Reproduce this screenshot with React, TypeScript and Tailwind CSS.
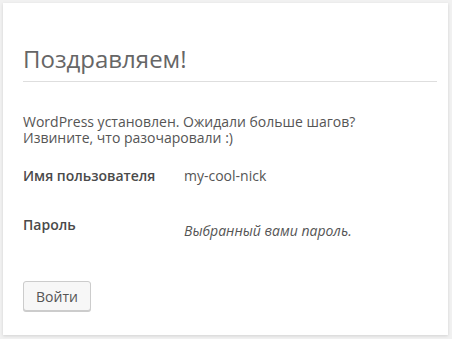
export default function App() {
  return (
    <div className="w-[452px] h-[339px] bg-[#f1f1f1] pt-[3px] pl-[3px] overflow-hidden" style={{ fontFamily: '"Open Sans", "Noto Sans", sans-serif' }}>
      <div className="w-[445px] h-[332px] bg-white shadow-[0_1px_3px_rgba(0,0,0,0.13)] pl-[20px] pr-[11px] pt-[43px]">
        <h1 className="text-[24px] leading-[26px] font-normal text-[#666] pb-[9px] border-b border-[#dedede]">Поздравляем!</h1>
        <p className="mt-[32px] text-[14px] leading-[16px] text-[#555]">
          WordPress установлен. Ожидали больше шагов?
          <br />
          Извините, что разочаровали :)
        </p>
        <div className="mt-[22px] grid grid-cols-[161px_1fr] text-[14px] leading-[16px]">
          <div className="font-semibold text-[#4a4a4a]">Имя пользователя</div>
          <div className="text-[#555]">my-cool-nick</div>
          <div className="font-semibold text-[#4a4a4a] mt-[33px]">Пароль</div>
          <div className="italic text-[#555] mt-[39px]">Выбранный вами пароль.</div>
        </div>
        <button className="mt-[42px] w-[68px] h-[30px] bg-[#f7f7f7] border border-[#cccccc] rounded-[3px] shadow-[0_1px_0_#cccccc] text-[14px] text-[#555]">Войти</button>
      </div>
    </div>
  );
}
